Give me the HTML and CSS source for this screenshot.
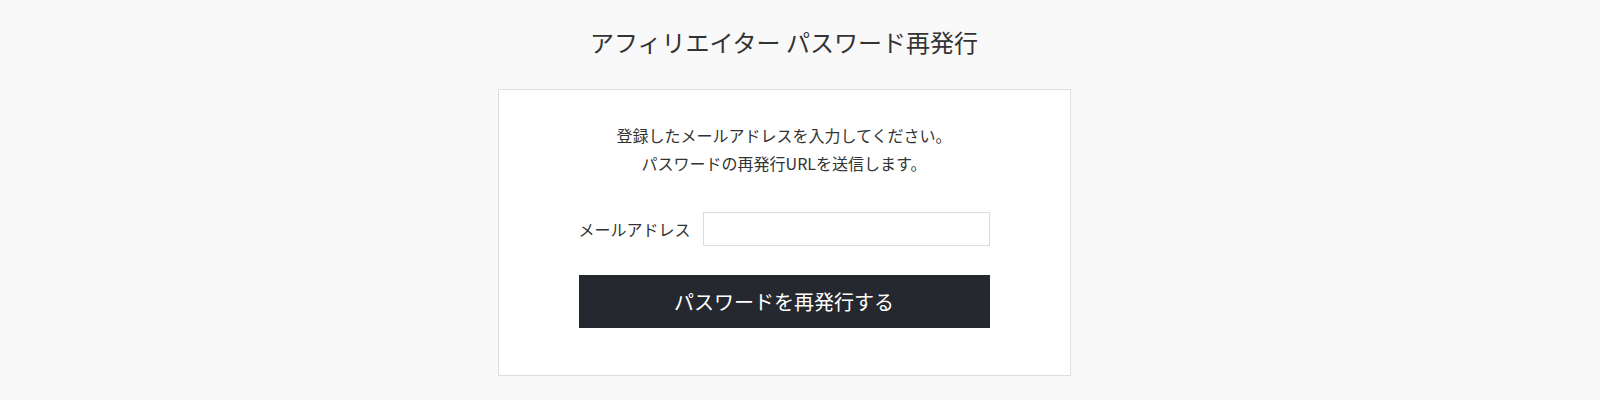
FILE: index.html
```html
<!DOCTYPE html>
<html lang="ja">
<head>
    <meta charset="UTF-8">
    <meta name="viewport" content="width=device-width, initial-scale=1.0">
    <title>アフィリエイター パスワード再発行</title>
    <link rel="stylesheet" href="styles.css">
</head>
<body>
    <div class="page">
        <h1 class="page-title">アフィリエイター パスワード再発行</h1>

        <div class="reset-box">
            <p class="reset-lead">
                登録したメールアドレスを入力してください。<br>
                パスワードの再発行URLを送信します。
            </p>

            <form class="reset-form" onsubmit="return false;">
                <div class="form-row">
                    <label class="form-label" for="email">メールアドレス</label>
                    <input class="form-input" type="email" id="email" name="email">
                </div>
                <button class="submit-button" type="submit">パスワードを再発行する</button>
            </form>
        </div>
    </div>
</body>
</html>
```

FILE: styles.css
```css
body {
    margin: 0;
    background: #f9f9f9;
    color: #333;
    font-family: "Noto Sans CJK JP", "Noto Sans", sans-serif;
}

.page {
    width: 1568px;
    display: flex;
    flex-direction: column;
    align-items: center;
}

.page-title {
    margin: 24px 0 29px;
    font-size: 24px;
    font-weight: normal;
    line-height: 36px;
    color: #333;
}

.reset-box {
    width: 411px;
    padding: 31px 80px 47px;
    background: #fff;
    border: 1px solid #dedede;
}

.reset-lead {
    margin: 0 0 35px;
    font-size: 16px;
    line-height: 28px;
    text-align: center;
}

.form-row {
    display: flex;
    align-items: center;
    gap: 12px;
    margin-bottom: 29px;
}

.form-label {
    font-size: 16px;
    white-space: nowrap;
}

.form-input {
    flex: 1;
    height: 34px;
    box-sizing: border-box;
    border: 1px solid #dcdcdc;
    background: #fff;
    padding: 4px 8px;
    font-size: 16px;
    outline: none;
}

.submit-button {
    display: block;
    width: 100%;
    height: 53px;
    border: none;
    background: #25292f;
    color: #fff;
    font-family: inherit;
    font-size: 20px;
    cursor: pointer;
}
```
